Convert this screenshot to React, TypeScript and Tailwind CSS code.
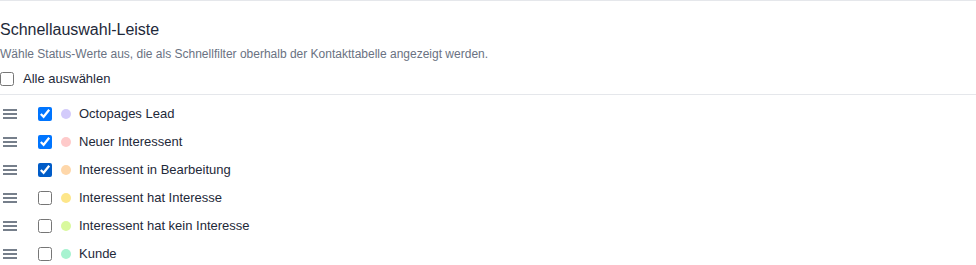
const items = [
  { label: "Octopages Lead", color: "bg-[#d3cbfb]", checked: true },
  { label: "Neuer Interessent", color: "bg-[#fecaca]", checked: true },
  { label: "Interessent in Bearbeitung", color: "bg-[#fed7aa]", checked: true, dark: true },
  { label: "Interessent hat Interesse", color: "bg-[#fde68a]", checked: false },
  { label: "Interessent hat kein Interesse", color: "bg-[#d9f99d]", checked: false },
  { label: "Kunde", color: "bg-[#a7f3d0]", checked: false },
];

function Handle() {
  return (
    <svg width="14" height="10" viewBox="0 0 14 10" className="text-gray-600">
      <path d="M0 1h14M0 5h14M0 9h14" stroke="currentColor" strokeWidth="1.6" />
    </svg>
  );
}

export default function App() {
  return (
    <div className="w-[976px] bg-white font-['Liberation_Sans',Arial,sans-serif]">
      <div className="border-t border-b border-gray-200 pb-[5px]">
        <h2 className="mt-[17px] text-base leading-6 text-gray-800">Schnellauswahl-Leiste</h2>
        <p className="mt-1 text-xs leading-4 text-gray-500">
          Wähle Status-Werte aus, die als Schnellfilter oberhalb der Kontakttabelle angezeigt werden.
        </p>
        <label className="mt-[7px] flex h-5 items-center text-[13px] text-gray-800">
          <input type="checkbox" className="size-[14px]" />
          <span className="ml-[9px]">Alle auswählen</span>
        </label>
      </div>
      <div className="pt-[5px]">
        {items.map((it) => (
          <div key={it.label} className="flex h-7 items-center text-[13px] text-gray-800">
            <div className="flex w-[38px] pl-[3px]">
              <Handle />
            </div>
            <input
              type="checkbox"
              defaultChecked={it.checked}
              className={`size-[14px] ${it.dark ? "accent-[#005cc8]" : ""}`}
            />
            <span className={`ml-[9px] size-[10px] rounded-full ${it.color}`} />
            <span className="ml-[8px]">{it.label}</span>
          </div>
        ))}
      </div>
    </div>
  );
}
